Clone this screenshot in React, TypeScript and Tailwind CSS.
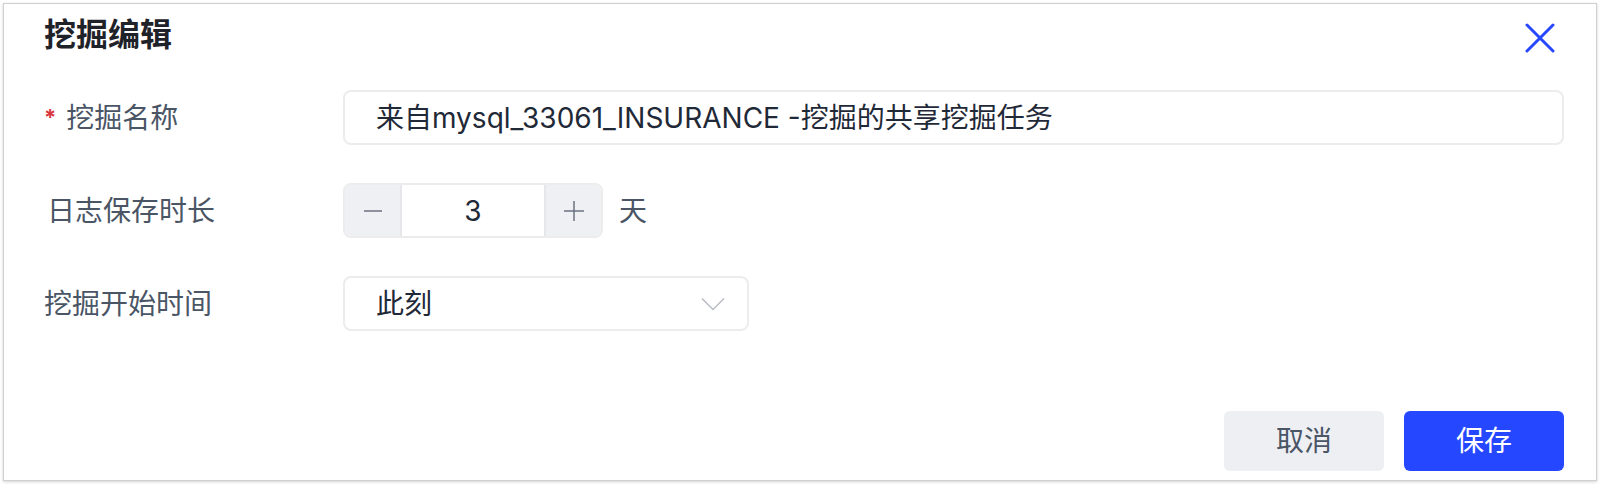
const font = { fontFamily: '"Inter", "Noto Sans CJK SC", sans-serif' };

export default function App() {
  return (
    <div className="w-[1600px] h-[484px] bg-white p-[3px]" style={font}>
      <div className="h-[478px] border border-[#cfcfcf] bg-white shadow-[0_1px_3px_rgba(0,0,0,0.18)] flex flex-col pl-[40px] pr-[32px]">
        {/* header */}
        <div className="flex items-center justify-between h-[62px]">
          <h2 className="text-[32px] font-bold text-[#1f2329] leading-none">挖掘编辑</h2>
          <button className="w-[30px] h-[30px] mt-[5px] flex items-center justify-center text-[#2748ff] mr-[9px]">
            <svg width="30" height="30" viewBox="0 0 30 30" fill="none" stroke="currentColor" strokeWidth="3" strokeLinecap="round">
              <path d="M2 2 L28 28 M28 2 L2 28" />
            </svg>
          </button>
        </div>

        {/* form */}
        <div className="flex flex-col gap-[38px] mt-[24px]">
          <div className="flex items-center">
            <label className="w-[299px] flex items-center text-[28px] text-[#4a5565]">
              <span className="text-[#d9363e] text-[22px] mr-[10px] font-bold">*</span>
              挖掘名称
            </label>
            <div className="flex-1 h-[55px] border-2 border-[#ececec] rounded-[8px] flex items-center px-[31px] text-[28px] text-[#1f2937]">
              来自mysql_33061_INSURANCE -挖掘的共享挖掘任务
            </div>
          </div>

          <div className="flex items-center">
            <label className="w-[299px] pl-[3px] text-[28px] text-[#4a5565]">日志保存时长</label>
            <div className="flex items-center">
              <div className="flex h-[55px] w-[260px] border-2 border-[#ececec] rounded-[8px] overflow-hidden">
                <div className="w-[55px] bg-[#eef0f4] flex items-center justify-center text-[#6b7280]">
                  <svg width="18" height="18" viewBox="0 0 18 18" fill="none" stroke="currentColor" strokeWidth="1.5">
                    <path d="M0 9 H18" />
                  </svg>
                </div>
                <div className="flex-1 border-x-2 border-[#e6e7eb] flex items-center justify-center text-[28px] text-[#1f2937]">3</div>
                <div className="w-[55px] bg-[#eef0f4] flex items-center justify-center text-[#6b7280]">
                  <svg width="20" height="20" viewBox="0 0 20 20" fill="none" stroke="currentColor" strokeWidth="1.5">
                    <path d="M0 10 H20 M10 0 V20" />
                  </svg>
                </div>
              </div>
              <span className="ml-[16px] text-[28px] text-[#4a5565]">天</span>
            </div>
          </div>

          <div className="flex items-center">
            <label className="w-[299px] text-[28px] text-[#4a5565]">挖掘开始时间</label>
            <div className="w-[406px] h-[55px] border-2 border-[#ececec] rounded-[8px] flex items-center justify-between pl-[31px] pr-[22px] text-[28px] text-[#1f2937]">
              <span>此刻</span>
              <svg width="24" height="14" viewBox="0 0 24 14" fill="none" stroke="#b8bcc4" strokeWidth="1.5">
                <path d="M1 1.5 L12 12.5 L23 1.5" />
              </svg>
            </div>
          </div>
        </div>

        {/* footer */}
        <div className="mt-auto mb-[9px] flex justify-end gap-[20px]">
          <button className="w-[160px] h-[60px] rounded-[6px] bg-[#eeeff3] text-[28px] text-[#4a5565]">取消</button>
          <button className="w-[160px] h-[60px] rounded-[6px] bg-[#2447ff] text-[28px] text-white">保存</button>
        </div>
      </div>
    </div>
  );
}
